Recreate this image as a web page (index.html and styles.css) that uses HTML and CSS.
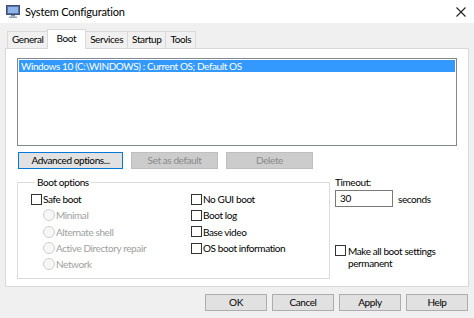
FILE: index.html
```html
<!DOCTYPE html>
<html>
<head>
<meta charset="utf-8">
<link rel="stylesheet" href="styles.css">
</head>
<body>
<div class="titlebar">
  <svg class="appicon" width="14" height="13" viewBox="0 0 14 13">
    <rect x="0.5" y="0.5" width="13" height="9" fill="#5a6f9c" stroke="#3d4f78"/>
    <rect x="2" y="2" width="10" height="6" fill="#8fb6ea"/>
    <rect x="5" y="10" width="4" height="1.5" fill="#7d8aa5"/>
    <rect x="3" y="11.5" width="8" height="1.5" fill="#9aa3b5"/>
  </svg>
  <span class="title">System Configuration</span>
  <svg class="close" width="10" height="10" viewBox="0 0 10 10">
    <path d="M0.5 0.5 L9.5 9.5 M9.5 0.5 L0.5 9.5" stroke="#222" stroke-width="1.1"/>
  </svg>
</div>
<div class="tabs">
  <div class="tab">General</div>
  <div class="tab active">Boot</div>
  <div class="tab">Services</div>
  <div class="tab">Startup</div>
  <div class="tab">Tools</div>
</div>
<div class="panel">
  <div class="listbox">
    <div class="row">Windows 10 (C:\WINDOWS) : Current OS; Default OS</div>
  </div>
  <div class="btnrow">
    <div class="btn focus w-adv">Advanced options...</div>
    <div class="btn disabled w-mid">Set as default</div>
    <div class="btn disabled w-mid">Delete</div>
  </div>
  <div class="lower">
    <fieldset class="group">
      <legend>Boot options</legend>
      <div class="cols">
        <div class="col left">
          <div class="item"><span class="chk"></span>Safe boot</div>
          <div class="item sub dis"><span class="radio"></span>Minimal</div>
          <div class="item sub dis"><span class="radio"></span>Alternate shell</div>
          <div class="item sub dis"><span class="radio"></span>Active Directory repair</div>
          <div class="item sub dis"><span class="radio"></span>Network</div>
        </div>
        <div class="col right">
          <div class="item"><span class="chk"></span>No GUI boot</div>
          <div class="item"><span class="chk"></span>Boot log</div>
          <div class="item"><span class="chk"></span>Base video</div>
          <div class="item"><span class="chk"></span>OS boot information</div>
        </div>
      </div>
    </fieldset>
    <div class="side">
      <div class="lbl">Timeout:</div>
      <div class="timeout">
        <div class="input">30</div>
        <span class="secs">seconds</span>
      </div>
      <div class="perm">
        <span class="chk"></span>
        <span class="permtext">Make all boot settings<br>permanent</span>
      </div>
    </div>
  </div>
</div>
<div class="footer">
  <div class="btn fbtn">OK</div>
  <div class="btn fbtn">Cancel</div>
  <div class="btn fbtn">Apply</div>
  <div class="btn fbtn">Help</div>
</div>
</body>
</html>
```
FILE: styles.css
```css
* { box-sizing: border-box; }
html, body { margin: 0; padding: 0; }
body {
  width: 474px;
  height: 318px;
  overflow: hidden;
  background: #f0f0f0;
  font-family: Lato, "Noto Sans", sans-serif;
  font-size: 10px;
  letter-spacing: -0.4px;
  color: #000;
}
.titlebar {
  height: 23px;
  background: #fff;
  display: flex;
  align-items: center;
  padding: 0 7px 0 6px;
}
.appicon { margin-right: 5px; }
.title { font-size: 11px; letter-spacing: -0.2px; flex: 1; }
.close { margin-right: 1px; }
.tabs {
  display: flex;
  align-items: flex-end;
  height: 25px;
  padding-left: 7px;
  position: relative;
  z-index: 1;
}
.tab {
  height: 17px;
  line-height: 15px;
  padding: 0 4px;
  border: 1px solid #d9d9d9;
  border-bottom: none;
  background: #f0f0f0;
  margin-right: -1px;
}
.tab.active {
  height: 20px;
  line-height: 16px;
  background: #fff;
  margin-bottom: -1px;
  padding: 0 9px 0 8px;
}
.panel {
  margin: 0 5px;
  height: 239px;
  background: #fff;
  border: 1px solid #d9d9d9;
  padding: 9px 11px 0 11px;
}
.listbox {
  height: 88px;
  border: 1px solid #828790;
  padding: 1px;
}
.row {
  background: #3399ff;
  color: #fff;
  height: 12px;
  line-height: 12px;
  padding-left: 2px;
  white-space: nowrap;
}
.btnrow {
  display: flex;
  gap: 8px;
  margin-top: 6px;
  padding-left: 1px;
}
.btn {
  height: 17px;
  line-height: 15px;
  text-align: center;
  border: 1px solid #adadad;
  background: #e1e1e1;
  white-space: nowrap;
}
.btn.focus { border-color: #0078d7; }
.btn.disabled {
  background: #cccccc;
  border-color: #bfbfbf;
  color: #8a8a8a;
}
.w-adv { width: 105px; }
.w-mid { width: 87px; }
.lower {
  display: flex;
  margin-top: 7px;
}
.group {
  margin: 0;
  padding: 2px 0 0 13px;
  width: 313px;
  height: 103px;
  border: 1px solid #dcdcdc;
  min-width: 0;
}
.group legend {
  padding: 0 2px;
  margin-left: 4px;
  line-height: 13px;
}
.cols { display: flex; }
.col.left { width: 160px; }
.item {
  height: 16.3px;
  display: flex;
  align-items: center;
  white-space: nowrap;
}
.item.sub { padding-left: 12px; }
.item.dis { color: #a0a0a0; }
.chk {
  width: 11px;
  height: 11px;
  border: 1px solid #333;
  background: #fff;
  margin-right: 1px;
  flex: none;
}
.radio {
  width: 12px;
  height: 12px;
  border: 1px solid #cfcfcf;
  border-radius: 50%;
  background: #f7f7f7;
  margin-right: 1px;
  flex: none;
}
.side {
  margin-left: 5px;
  white-space: nowrap;
}
.lbl { line-height: 13px; }
.timeout {
  display: flex;
  align-items: center;
  margin-top: 1px;
}
.input {
  width: 58px;
  height: 17px;
  border: 1px solid #7a7a7a;
  line-height: 15px;
  padding-left: 4px;
}
.secs { margin-left: 5px; }
.perm {
  display: flex;
  align-items: flex-start;
  margin-top: 38px;
}
.permtext { line-height: 12px; margin-left: 1px; }
.footer {
  display: flex;
  justify-content: flex-end;
  gap: 5px;
  padding: 7px 6px 0 0;
}
.fbtn { width: 62px; }
```
